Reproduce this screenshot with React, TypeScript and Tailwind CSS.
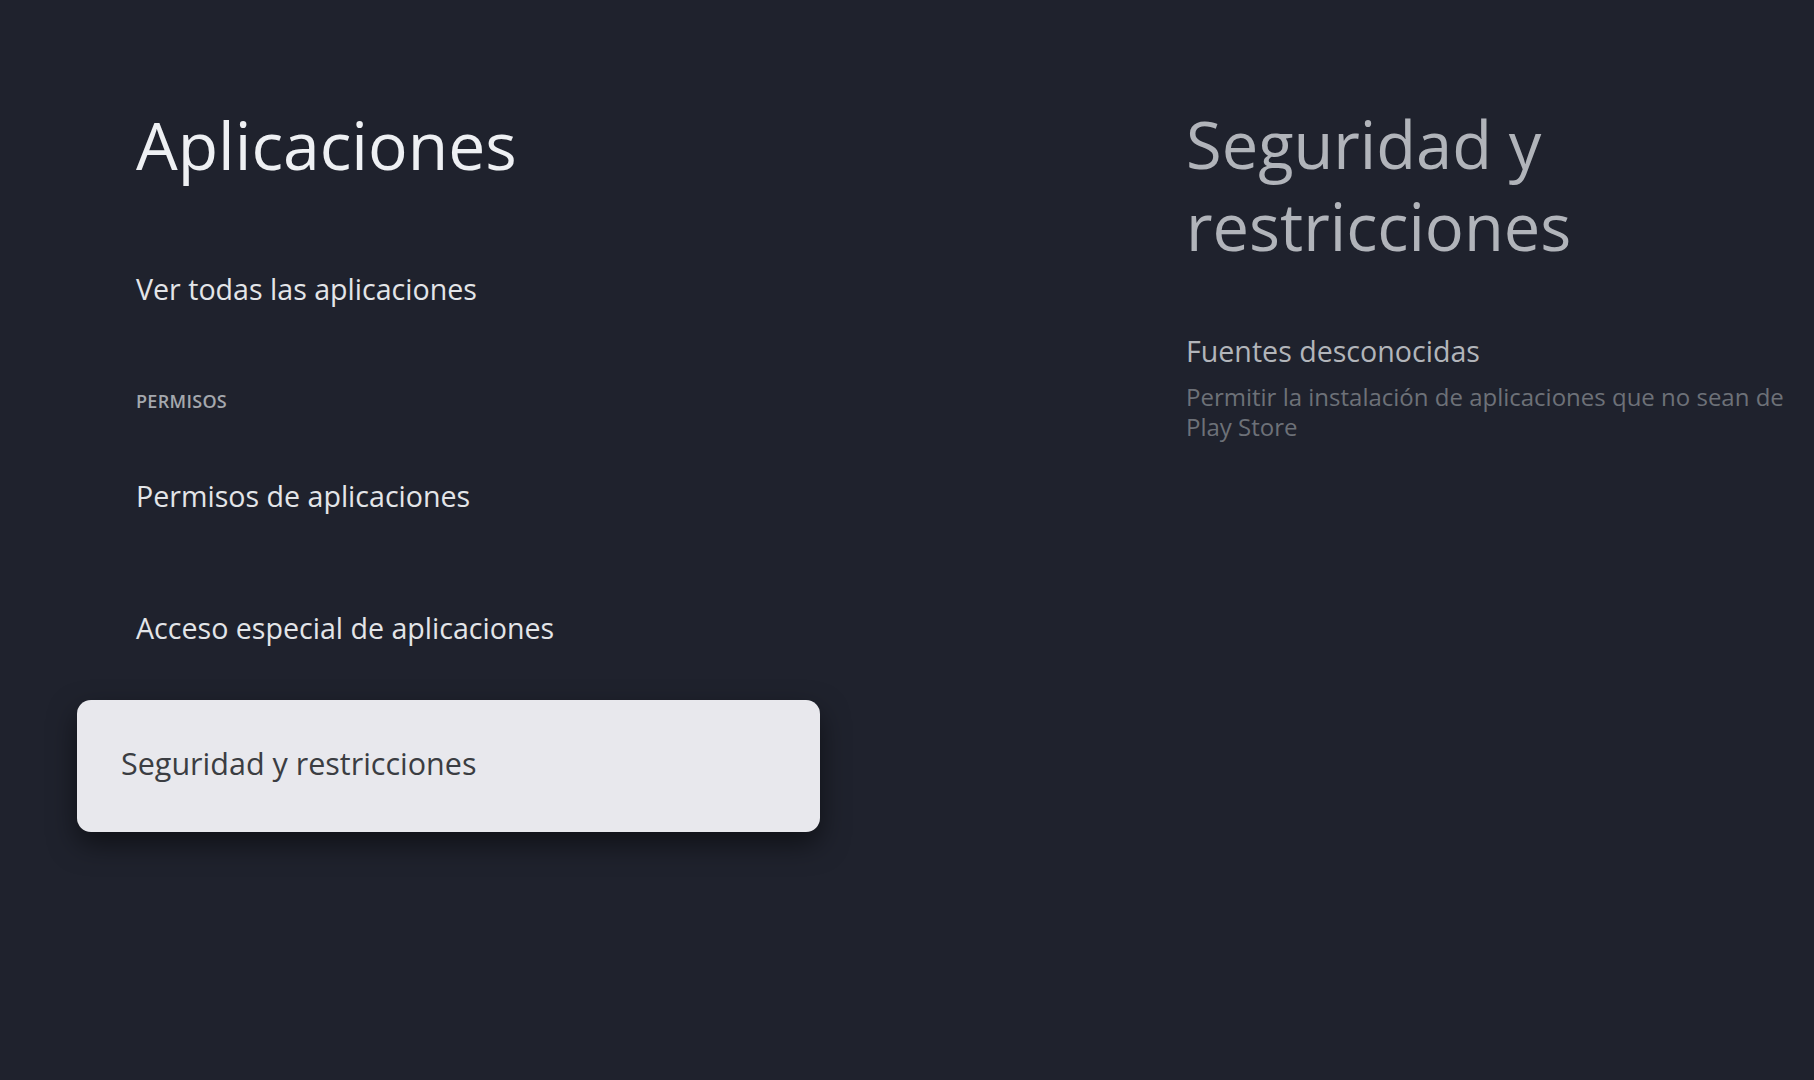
import React from 'react';

const FONT = { fontFamily: '"Open Sans", Roboto, sans-serif' };

interface MenuItem {
  label: string;
  focused?: boolean;
}

const APPS_ITEMS: MenuItem[] = [{ label: 'Ver todas las aplicaciones' }];

const PERMISSION_ITEMS: MenuItem[] = [
  { label: 'Permisos de aplicaciones' },
  { label: 'Acceso especial de aplicaciones' },
  { label: 'Seguridad y restricciones', focused: true },
];

function Row({ item }: { item: MenuItem }) {
  if (item.focused) {
    return (
      <div className="mt-[6px] h-[132px] flex items-center pl-[44px] pb-[6px] rounded-[14px] bg-[#e8e8ed] shadow-[0_12px_28px_rgba(0,0,0,0.5)]">
        <span className="text-[30.5px] leading-[40px] text-[#3b3d42]">{item.label}</span>
      </div>
    );
  }
  return (
    <div className="h-[132px] flex items-center pl-[59px]">
      <span className="text-[28.6px] leading-[36px] text-[#e3e5e8]">{item.label}</span>
    </div>
  );
}

export default function App() {
  return (
    <div className="w-[1814px] h-[1080px] overflow-hidden bg-[#1f222d] flex" style={FONT}>
      {/* Left menu */}
      <section className="w-[1186px] pl-[77px] pt-[103px]">
        <div className="w-[743px] flex flex-col">
          <h1 className="pl-[59px] text-[66px] leading-[82px] text-[#eef0f3] font-normal">Aplicaciones</h1>
          <div className="mt-[38px]">
            {APPS_ITEMS.map((item) => (
              <Row key={item.label} item={item} />
            ))}
          </div>
          <div className="h-[75px] pt-[16px] pl-[59px] flex items-center">
            <span className="text-[18px] leading-[20px] font-semibold tracking-[0.3px] text-[#a4a8ae]">PERMISOS</span>
          </div>
          {PERMISSION_ITEMS.map((item) => (
            <Row key={item.label} item={item} />
          ))}
        </div>
      </section>

      {/* Detail pane */}
      <section className="flex-1 pt-[103px]">
        <h2 className="text-[65px] leading-[82px] text-[#b1b4ba] font-normal">
          Seguridad y
          <br />
          restricciones
        </h2>
        <div className="mt-[66px] text-[28.6px] leading-[36px] text-[#b2b5ba]">Fuentes desconocidas</div>
        <p className="mt-[13px] w-[615px] text-[24px] leading-[30px] text-[#6d7178]">
          Permitir la instalación de aplicaciones que no sean de Play Store
        </p>
      </section>
    </div>
  );
}
